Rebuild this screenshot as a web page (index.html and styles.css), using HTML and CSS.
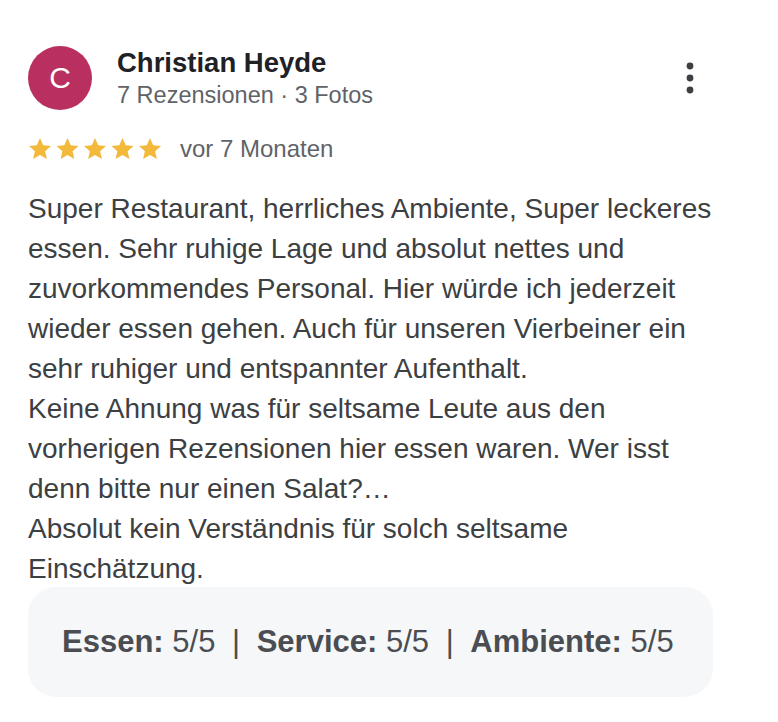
FILE: index.html
```html
<!DOCTYPE html>
<html lang="de">
  <head>
    <title>Rezension</title>
    <link rel="stylesheet" href="styles.css">
  </head>
  <body>
    <div class="review">
      <div class="review-head">
        <div class="avatar">C</div>
        <div class="author">
          <div class="author-name">Christian Heyde</div>
          <div class="author-meta">7 Rezensionen · 3 Fotos</div>
        </div>
        <div class="more">
          <svg width="10" height="32" viewBox="0 0 10 32">
            <circle cx="5" cy="4" r="3.4" fill="#3c4043" />
            <circle cx="5" cy="16" r="3.4" fill="#3c4043" />
            <circle cx="5" cy="28" r="3.4" fill="#3c4043" />
          </svg>
        </div>
      </div>

      <div class="rating">
        <svg class="stars" width="136" height="24" viewBox="0 0 136 24">
          <defs>
            <path id="star" d="M12 1l3.2 7.2 7.8.8-5.9 5.2 1.8 7.7L12 18l-6.9 3.9 1.8-7.7L1 9l7.8-.8z" />
          </defs>
          <use href="#star" x="0" fill="#f2b93b" />
          <use href="#star" x="27.5" fill="#f2b93b" />
          <use href="#star" x="55" fill="#f2b93b" />
          <use href="#star" x="82.5" fill="#f2b93b" />
          <use href="#star" x="110" fill="#f2b93b" />
        </svg>
        <span class="rating-date">vor 7 Monaten</span>
      </div>

      <p class="review-text">
        Super Restaurant, herrliches Ambiente, Super leckeres essen. Sehr ruhige Lage und absolut nettes und zuvorkommendes Personal. Hier würde ich jederzeit wieder essen gehen. Auch für unseren Vierbeiner ein sehr ruhiger und entspannter Aufenthalt.<br>
        Keine Ahnung was für seltsame Leute aus den vorherigen Rezensionen hier essen waren. Wer isst denn bitte nur einen Salat?…<br>
        Absolut kein Verständnis für solch seltsame Einschätzung.
      </p>

      <div class="scores">
        <span class="scores-line"><b>Essen:</b> 5/5 <span class="sep">|</span> <b>Service:</b> 5/5 <span class="sep">|</span> <b>Ambiente:</b> 5/5</span>
      </div>
    </div>
  </body>
</html>
```

FILE: styles.css
```css
body {
  margin: 0;
  padding: 0;
  font-family: "Liberation Sans", Arial, sans-serif;
  background-color: #fff;
  color: #3c4043;
}

.review {
  width: 685px;
  padding: 46px 0 0 28px;
}

.review-head {
  display: flex;
  align-items: flex-start;
}

.avatar {
  width: 64px;
  height: 64px;
  border-radius: 50%;
  background-color: #b92f5f;
  color: #fff;
  font-size: 30px;
  display: flex;
  align-items: center;
  justify-content: center;
  flex-shrink: 0;
}

.author {
  margin-left: 25px;
  flex: 1;
}

.author-name {
  font-size: 27.5px;
  font-weight: bold;
  color: #202124;
  line-height: 34px;
}

.author-meta {
  font-size: 23.5px;
  color: #5f6368;
  line-height: 30px;
}

.more {
  margin-top: 16px;
  margin-right: 18px;
}

.rating {
  display: flex;
  align-items: center;
  margin-top: 24px;
  height: 30px;
}

.stars {
  display: block;
}

.rating-date {
  font-size: 24px;
  color: #5f6368;
  margin-left: 16px;
}

.review-text {
  width: 692px;
  margin: 25px 0 0;
  font-size: 28px;
  line-height: 40px;
  color: #3c4043;
}

.scores {
  margin-top: -2px;
  background-color: #f6f7f9;
  border-radius: 28px;
  height: 110px;
  display: flex;
  align-items: center;
  padding-left: 34px;
  font-size: 31px;
  color: #4a4d52;
}

.scores-line {
  white-space: nowrap;
}

.scores .sep {
  margin: 0 8px;
}
```
